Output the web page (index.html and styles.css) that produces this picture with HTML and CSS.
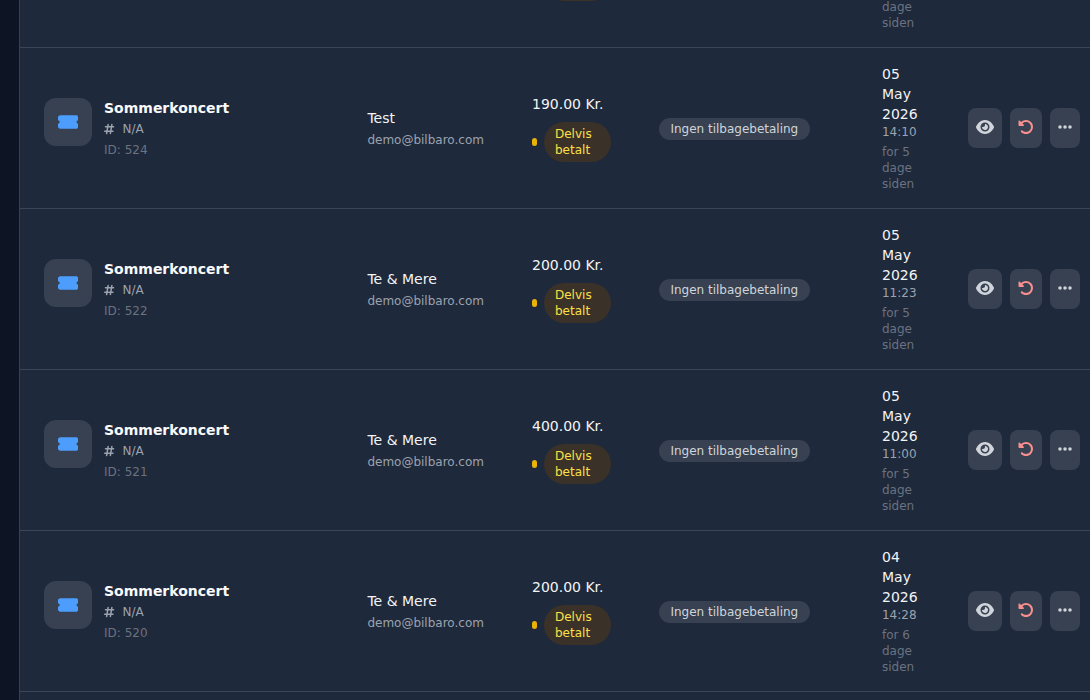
FILE: index.html
```html
<!DOCTYPE html>
<html lang="da">
<head>
<meta charset="utf-8">
<title>Ordrer</title>
<link rel="stylesheet" href="styles.css">
</head>
<body>
<svg class="sprites" aria-hidden="true">
  <symbol id="i-ticket" viewBox="0 0 576 512"><path d="M0 128C0 92.7 28.7 64 64 64H512c35.3 0 64 28.7 64 64v64c0 8.8-7.4 15.7-15.7 18.6C541.5 217.1 528 235 528 256s13.5 38.9 32.3 45.4c8.3 2.9 15.7 9.8 15.7 18.6v64c0 35.3-28.7 64-64 64H64c-35.3 0-64-28.7-64-64V320c0-8.8 7.4-15.7 15.7-18.6C34.5 294.9 48 277 48 256s-13.5-38.9-32.3-45.4C7.4 207.7 0 200.8 0 192V128z"/></symbol>
  <symbol id="i-hash" viewBox="0 0 448 512"><path d="M181.3 32.4c17.4 2.9 29.2 19.4 26.3 36.8L197.8 128h95.1l11.5-69.3c2.9-17.4 19.4-29.2 36.8-26.3s29.2 19.4 26.3 36.8L357.8 128H416c17.7 0 32 14.3 32 32s-14.3 32-32 32H347.1L325.8 320H384c17.7 0 32 14.3 32 32s-14.3 32-32 32H315.1l-11.5 69.3c-2.9 17.4-19.4 29.2-36.8 26.3s-29.2-19.4-26.3-36.8l9.8-58.7H155.1l-11.5 69.3c-2.9 17.4-19.4 29.2-36.8 26.3s-29.2-19.4-26.3-36.8L90.2 384H32c-17.7 0-32-14.3-32-32s14.3-32 32-32h68.9l21.3-128H64c-17.7 0-32-14.3-32-32s14.3-32 32-32h68.9l11.5-69.3c2.9-17.4 19.4-29.2 36.8-26.3zM187.1 192L165.8 320h95.1l21.3-128H187.1z"/></symbol>
  <symbol id="i-eye" viewBox="0 0 576 512"><path d="M288 32c-80.8 0-145.5 36.8-192.6 80.6C48.6 156 17.3 208 2.5 243.7c-3.3 7.9-3.3 16.7 0 24.6C17.3 304 48.6 356 95.4 399.4C142.5 443.2 207.2 480 288 480s145.5-36.8 192.6-80.6c46.8-43.5 78.1-95.4 93-131.1c3.3-7.9 3.3-16.7 0-24.6c-14.9-35.7-46.2-87.7-93-131.1C433.5 68.8 368.8 32 288 32zM144 256a144 144 0 1 1 288 0 144 144 0 1 1 -288 0zm144-64c0 35.3-28.7 64-64 64c-7.1 0-13.9-1.2-20.3-3.3c-5.5-1.8-11.9 1.6-11.7 7.4c.3 6.9 1.3 13.8 3.2 20.7c13.7 51.2 66.4 81.6 117.6 67.9s81.6-66.4 67.9-117.6c-11.1-41.5-47.8-69.4-88.6-71.1c-5.8-.2-9.2 6.1-7.4 11.7c2.1 6.4 3.3 13.2 3.3 20.3z"/></symbol>
  <symbol id="i-undo" viewBox="0 0 512 512"><path d="M48.5 224H40c-13.3 0-24-10.7-24-24V72c0-9.7 5.8-18.5 14.8-22.2s19.3-1.7 26.2 5.2L98.6 96.6c87.6-86.5 228.7-86.2 315.8 1c87.5 87.5 87.5 229.3 0 316.8s-229.3 87.5-316.8 0c-12.5-12.5-12.5-32.8 0-45.3s32.8-12.5 45.3 0c62.5 62.5 163.8 62.5 226.3 0s62.5-163.8 0-226.3c-62.2-62.2-162.7-62.5-225.3-1L185 183c6.9 6.9 8.9 17.2 5.2 26.2s-12.5 14.8-22.2 14.8H48.5z"/></symbol>
  <symbol id="i-more" viewBox="0 0 448 512"><path d="M8 256a56 56 0 1 1 112 0A56 56 0 1 1 8 256zm160 0a56 56 0 1 1 112 0 56 56 0 1 1 -112 0zm216-56a56 56 0 1 1 0 112 56 56 0 1 1 0-112z"/></symbol>
</svg>
<main class="panel">

  <article class="row">
    <div class="event">
      <div class="thumb"><svg class="ticket"><use href="#i-ticket"/></svg></div>
      <div class="event-text"><div class="title">Sommerkoncert</div><div class="ref"><svg class="hash"><use href="#i-hash"/></svg><span>N/A</span></div><div class="id">ID: 525</div></div>
    </div>
    <div class="customer"><div class="name">Test</div><div class="email">demo@bilbaro.com</div></div>
    <div class="amount"><div class="sum">200.00 Kr.</div><div class="status"><span class="dot"></span><span class="pill">Delvis betalt</span></div></div>
    <div class="refund"><span class="refund-pill">Ingen tilbagebetaling</span></div>
    <div class="when"><div class="date">05 May 2026</div><div class="time">14:30</div><div class="ago">for 5 dage siden</div></div>
    <div class="actions"><button class="btn b1" type="button"><svg class="i-eye"><use href="#i-eye"/></svg></button><button class="btn b2" type="button"><svg class="i-undo"><use href="#i-undo"/></svg></button><button class="btn b3" type="button"><svg class="i-more"><use href="#i-more"/></svg></button></div>
  </article>

  <article class="row">
    <div class="event">
      <div class="thumb"><svg class="ticket"><use href="#i-ticket"/></svg></div>
      <div class="event-text"><div class="title">Sommerkoncert</div><div class="ref"><svg class="hash"><use href="#i-hash"/></svg><span>N/A</span></div><div class="id">ID: 524</div></div>
    </div>
    <div class="customer"><div class="name">Test</div><div class="email">demo@bilbaro.com</div></div>
    <div class="amount"><div class="sum">190.00 Kr.</div><div class="status"><span class="dot"></span><span class="pill">Delvis betalt</span></div></div>
    <div class="refund"><span class="refund-pill">Ingen tilbagebetaling</span></div>
    <div class="when"><div class="date">05 May 2026</div><div class="time">14:10</div><div class="ago">for 5 dage siden</div></div>
    <div class="actions"><button class="btn b1" type="button"><svg class="i-eye"><use href="#i-eye"/></svg></button><button class="btn b2" type="button"><svg class="i-undo"><use href="#i-undo"/></svg></button><button class="btn b3" type="button"><svg class="i-more"><use href="#i-more"/></svg></button></div>
  </article>

  <article class="row">
    <div class="event">
      <div class="thumb"><svg class="ticket"><use href="#i-ticket"/></svg></div>
      <div class="event-text"><div class="title">Sommerkoncert</div><div class="ref"><svg class="hash"><use href="#i-hash"/></svg><span>N/A</span></div><div class="id">ID: 522</div></div>
    </div>
    <div class="customer"><div class="name">Te &amp; Mere</div><div class="email">demo@bilbaro.com</div></div>
    <div class="amount"><div class="sum">200.00 Kr.</div><div class="status"><span class="dot"></span><span class="pill">Delvis betalt</span></div></div>
    <div class="refund"><span class="refund-pill">Ingen tilbagebetaling</span></div>
    <div class="when"><div class="date">05 May 2026</div><div class="time">11:23</div><div class="ago">for 5 dage siden</div></div>
    <div class="actions"><button class="btn b1" type="button"><svg class="i-eye"><use href="#i-eye"/></svg></button><button class="btn b2" type="button"><svg class="i-undo"><use href="#i-undo"/></svg></button><button class="btn b3" type="button"><svg class="i-more"><use href="#i-more"/></svg></button></div>
  </article>

  <article class="row">
    <div class="event">
      <div class="thumb"><svg class="ticket"><use href="#i-ticket"/></svg></div>
      <div class="event-text"><div class="title">Sommerkoncert</div><div class="ref"><svg class="hash"><use href="#i-hash"/></svg><span>N/A</span></div><div class="id">ID: 521</div></div>
    </div>
    <div class="customer"><div class="name">Te &amp; Mere</div><div class="email">demo@bilbaro.com</div></div>
    <div class="amount"><div class="sum">400.00 Kr.</div><div class="status"><span class="dot"></span><span class="pill">Delvis betalt</span></div></div>
    <div class="refund"><span class="refund-pill">Ingen tilbagebetaling</span></div>
    <div class="when"><div class="date">05 May 2026</div><div class="time">11:00</div><div class="ago">for 5 dage siden</div></div>
    <div class="actions"><button class="btn b1" type="button"><svg class="i-eye"><use href="#i-eye"/></svg></button><button class="btn b2" type="button"><svg class="i-undo"><use href="#i-undo"/></svg></button><button class="btn b3" type="button"><svg class="i-more"><use href="#i-more"/></svg></button></div>
  </article>

  <article class="row">
    <div class="event">
      <div class="thumb"><svg class="ticket"><use href="#i-ticket"/></svg></div>
      <div class="event-text"><div class="title">Sommerkoncert</div><div class="ref"><svg class="hash"><use href="#i-hash"/></svg><span>N/A</span></div><div class="id">ID: 520</div></div>
    </div>
    <div class="customer"><div class="name">Te &amp; Mere</div><div class="email">demo@bilbaro.com</div></div>
    <div class="amount"><div class="sum">200.00 Kr.</div><div class="status"><span class="dot"></span><span class="pill">Delvis betalt</span></div></div>
    <div class="refund"><span class="refund-pill">Ingen tilbagebetaling</span></div>
    <div class="when"><div class="date">04 May 2026</div><div class="time">14:28</div><div class="ago">for 6 dage siden</div></div>
    <div class="actions"><button class="btn b1" type="button"><svg class="i-eye"><use href="#i-eye"/></svg></button><button class="btn b2" type="button"><svg class="i-undo"><use href="#i-undo"/></svg></button><button class="btn b3" type="button"><svg class="i-more"><use href="#i-more"/></svg></button></div>
  </article>

</main>
</body>
</html>
```

FILE: styles.css
```css
* { box-sizing: border-box; }
html, body { margin: 0; height: 700px; overflow: hidden; }
body {
  background: #0d1424;
  font-family: "DejaVu Sans", sans-serif;
  color: #f3f4f6;
  padding-left: 19px;
}
.sprites { display: none; }
svg { display: block; fill: currentColor; }

.panel {
  margin-top: -113px;
  height: 813px;
  background: #1e293b;
  border-left: 1px solid #374151;
}

.row {
  display: grid;
  grid-template-columns: 323.4px 164.6px 127.4px 222.6px 86px 1fr;
  align-items: center;
  height: 161px;
  padding: 16px 0 16px 24px;
  border-bottom: 1px solid #3a4656;
}

.event { display: flex; gap: 12px; align-items: center; }
.thumb {
  width: 48px; height: 48px; flex: none;
  display: flex; align-items: center; justify-content: center;
  background: #374151;
  border-radius: 12px;
  color: #4d9dfd;
  margin-bottom: 12px;
}
.ticket { width: 20.25px; height: 18px; }
.title { font-size: 14px; line-height: 20px; font-weight: 700; color: #f9fafb; }
.ref { display: flex; align-items: center; gap: 8px; font-size: 12px; line-height: 16px; color: #9ca3af; margin-top: 3px; }
.hash { width: 10.5px; height: 12px; }
.id { font-size: 12px; line-height: 16px; color: #6b7280; margin-top: 5px; }

.name { font-size: 14px; line-height: 20px; color: #f3f4f6; }
.email { font-size: 12px; line-height: 16px; color: #9ca3af; margin-top: 4px; }

.sum { font-size: 14px; line-height: 20px; color: #f3f4f6; }
.status { display: flex; align-items: center; gap: 7px; margin-top: 8px; }
.dot { width: 5px; height: 8px; border-radius: 999px; background: #eab308; flex: none; }
.pill {
  width: 67px;
  padding: 4px 11px;
  border-radius: 999px;
  background: #3a3129;
  color: #fde047;
  font-size: 12px;
  line-height: 16px;
}

.refund { padding-top: 1px; }
.refund-pill {
  display: inline-block;
  padding: 3px 12px 3px 11px;
  border-radius: 999px;
  background: #374151;
  color: #d1d5db;
  font-size: 12px;
  line-height: 16px;
}

.date { font-size: 14px; line-height: 20px; color: #f3f4f6; width: 40px; }
.time { font-size: 12px; line-height: 16px; color: #9ca3af; }
.ago { font-size: 12px; line-height: 16px; color: #6b7280; margin-top: 4px; width: 50px; }

.actions { display: flex; gap: 8px; }
.btn {
  height: 40px; padding: 0 0 2px;
  display: flex; align-items: center; justify-content: center;
  border: 0; border-radius: 8px;
  background: #374151;
  color: #d1d5db;
}
.b1 { width: 34px; }
.b2 { width: 32px; color: #f98f8f; }
.b3 { width: 30px; }
.i-eye { width: 18px; height: 16px; }
.i-undo { width: 16px; height: 16px; }
.i-more { width: 14px; height: 16px; }
```
